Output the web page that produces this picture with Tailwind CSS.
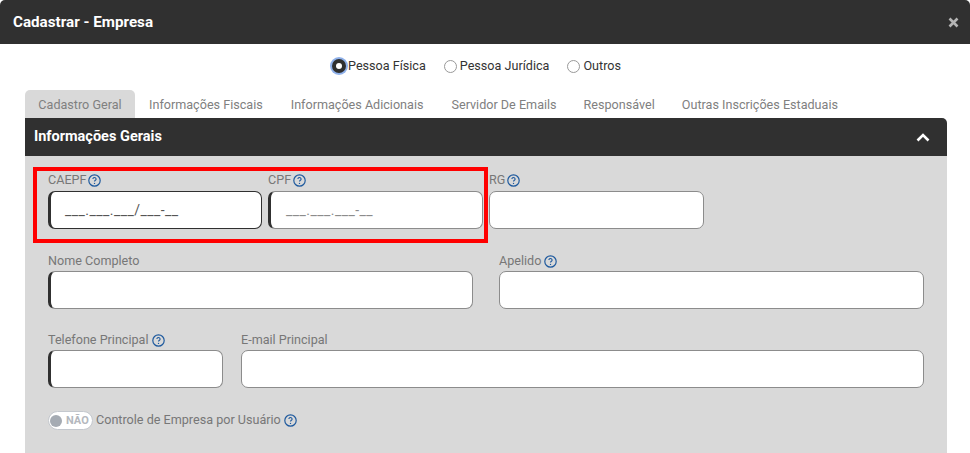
<!DOCTYPE html>
<html lang="pt-BR">
<head>
<meta charset="utf-8">
<script src="https://cdn.jsdelivr.net/npm/@tailwindcss/browser@4"></script>
</head>
<body class="bg-white">
<div class="relative w-[970px] h-[453px] overflow-hidden bg-white font-['Roboto',sans-serif] text-[12.6px] text-[#777]">
  <header class="h-11 bg-[#303030] rounded-t-[5px] flex items-center justify-between pl-[13px] pr-[11px]">
    <h1 class="text-[15.2px] font-bold text-white">Cadastrar - Empresa</h1>
    <svg class="w-[11px] h-[11px]" viewBox="0 0 11 11"><path d="M1.5 1.5l8 8M9.5 1.5l-8 8" stroke="#b4b4b4" stroke-width="2.6"/></svg>
  </header>

  <div class="h-[46px] flex items-center justify-center pr-[17px] text-[#333] pb-[2px]">
    <label class="flex items-center mr-[18px]">
      <span class="w-[14px] h-[14px] rounded-full bg-[#2f2f2f] ring-[2px] ring-[#8fb1ea] flex items-center justify-center"><span class="w-[6px] h-[6px] rounded-full bg-white"></span></span>
      <span class="ml-[2px]">Pessoa Física</span>
    </label>
    <label class="flex items-center mr-[18px]">
      <span class="w-[13px] h-[13px] rounded-full bg-white border border-[#999] mt-[1px]"></span>
      <span class="ml-[3px]">Pessoa Jurídica</span>
    </label>
    <label class="flex items-center">
      <span class="w-[13px] h-[13px] rounded-full bg-white border border-[#999] mt-[1px]"></span>
      <span class="ml-[3px]">Outros</span>
    </label>
  </div>

  <nav class="h-7 ml-[25px] flex items-center text-[#808080] pt-[2px]">
    <a class="h-7 w-[110px] -mt-[2px] pt-[2px] rounded-t-[5px] bg-[#d9d9d9] flex items-center justify-center">Cadastro Geral</a>
    <a class="ml-[14px]">Informações Fiscais</a>
    <a class="ml-[28px]">Informações Adicionais</a>
    <a class="ml-[28px]">Servidor De Emails</a>
    <a class="ml-[27px]">Responsável</a>
    <a class="ml-[27px]">Outras Inscrições Estaduais</a>
  </nav>

  <section class="ml-[25px] w-[922px] h-[335px]">
    <div class="h-[38px] bg-[#303030] rounded-tr-[5px] flex items-center justify-between pl-[9px] pr-[17px]">
      <h2 class="text-[14.5px] font-bold text-white">Informações Gerais</h2>
      <svg class="w-[14px] h-[9px]" viewBox="0 0 14 9"><path d="M1.500 7.500L7 2l5.500 5.500" fill="none" stroke="#fff" stroke-width="2.600"/></svg>
    </div>
    <div class="h-[297px] bg-[#d9d9d9] pt-[17px] pl-[23px] flex flex-col">

      <div class="flex gap-[6px]">
        <div class="w-[214px]">
          <div class="h-[18px] pb-[3px] flex items-center gap-[2px]">CAEPF
            <svg class="w-[13px] h-[13px]" viewBox="0 0 13 13"><circle cx="6.500" cy="6.500" r="5.700" fill="none" stroke="#1f5a9e" stroke-width="1.200"/><path d="M4.900 5.100a1.600 1.500 0 1 1 2.500 1.200c-.6.4-.9.600-.9 1.200" fill="none" stroke="#1f5a9e" stroke-width="1.100"/><circle cx="6.500" cy="9.400" r=".7" fill="#1f5a9e"/></svg>
          </div>
          <div class="h-[38px] bg-white rounded-[7px] border border-[#303030] border-l-[3px] flex items-center pl-[14px] text-[14px] text-[#555] tracking-[0.450px]">___.___.___/___-__</div>
        </div>
        <div class="w-[215px]">
          <div class="h-[18px] pb-[3px] flex items-center gap-[2px]">CPF
            <svg class="w-[13px] h-[13px]" viewBox="0 0 13 13"><circle cx="6.500" cy="6.500" r="5.700" fill="none" stroke="#1f5a9e" stroke-width="1.200"/><path d="M4.900 5.100a1.600 1.500 0 1 1 2.500 1.200c-.6.4-.9.600-.9 1.200" fill="none" stroke="#1f5a9e" stroke-width="1.100"/><circle cx="6.500" cy="9.400" r=".7" fill="#1f5a9e"/></svg>
          </div>
          <div class="h-[38px] bg-white rounded-[7px] border border-[#8c8c8c] border-l-[3px] border-l-[#303030] flex items-center pl-[15px] text-[14px] text-[#8c8c8c] tracking-[0.450px]">___.___.___-__</div>
        </div>
        <div class="w-[215px]">
          <div class="h-[18px] pb-[3px] flex items-center gap-[2px]">RG
            <svg class="w-[13px] h-[13px]" viewBox="0 0 13 13"><circle cx="6.500" cy="6.500" r="5.700" fill="none" stroke="#1f5a9e" stroke-width="1.200"/><path d="M4.900 5.100a1.600 1.500 0 1 1 2.500 1.200c-.6.4-.9.600-.9 1.200" fill="none" stroke="#1f5a9e" stroke-width="1.100"/><circle cx="6.500" cy="9.400" r=".7" fill="#1f5a9e"/></svg>
          </div>
          <div class="h-[38px] bg-white rounded-[7px] border border-[#8c8c8c]"></div>
        </div>
      </div>

      <div class="flex gap-[26px] mt-6">
        <div class="w-[425px]">
          <div class="h-[18px] pb-[2px] flex items-center">Nome Completo</div>
          <div class="h-[38px] bg-white rounded-[7px] border border-[#8c8c8c] border-l-[3px] border-l-[#303030]"></div>
        </div>
        <div class="w-[425px]">
          <div class="h-[18px] pb-[2px] flex items-center gap-[3px]">Apelido
            <svg class="w-[13px] h-[13px]" viewBox="0 0 13 13"><circle cx="6.500" cy="6.500" r="5.700" fill="none" stroke="#1f5a9e" stroke-width="1.200"/><path d="M4.900 5.100a1.600 1.500 0 1 1 2.500 1.200c-.6.4-.9.600-.9 1.200" fill="none" stroke="#1f5a9e" stroke-width="1.100"/><circle cx="6.500" cy="9.400" r=".7" fill="#1f5a9e"/></svg>
          </div>
          <div class="h-[38px] bg-white rounded-[7px] border border-[#8c8c8c]"></div>
        </div>
      </div>

      <div class="flex gap-[18px] mt-[23px]">
        <div class="w-[175px]">
          <div class="h-[18px] pb-[2px] flex items-center gap-[3px]">Telefone Principal
            <svg class="w-[13px] h-[13px]" viewBox="0 0 13 13"><circle cx="6.500" cy="6.500" r="5.700" fill="none" stroke="#1f5a9e" stroke-width="1.200"/><path d="M4.900 5.100a1.600 1.500 0 1 1 2.500 1.200c-.6.4-.9.600-.9 1.200" fill="none" stroke="#1f5a9e" stroke-width="1.100"/><circle cx="6.500" cy="9.400" r=".7" fill="#1f5a9e"/></svg>
          </div>
          <div class="h-[38px] bg-white rounded-[7px] border border-[#8c8c8c] border-l-[3px] border-l-[#303030]"></div>
        </div>
        <div class="w-[683px]">
          <div class="h-[18px] pb-[2px] flex items-center">E-mail Principal</div>
          <div class="h-[38px] bg-white rounded-[7px] border border-[#8c8c8c]"></div>
        </div>
      </div>

      <div class="flex items-center mt-[23px] h-[19px]">
        <span class="w-[45px] h-[19px] rounded-full bg-white border border-[#c4c8ce] flex items-center pl-[1px] text-[11px] font-bold text-[#b4b8be]">
          <span class="w-[12px] h-[12px] rounded-full bg-[#a5abb3] mr-[4px]"></span><span class="pt-[1px]">NÃO</span>
        </span>
        <span class="ml-[3px]">Controle de Empresa por Usuário</span>
        <svg class="ml-[3px] w-[13px] h-[13px]" viewBox="0 0 13 13"><circle cx="6.500" cy="6.500" r="5.700" fill="none" stroke="#1f5a9e" stroke-width="1.200"/><path d="M4.900 5.100a1.600 1.500 0 1 1 2.500 1.200c-.6.4-.9.600-.9 1.200" fill="none" stroke="#1f5a9e" stroke-width="1.100"/><circle cx="6.500" cy="9.400" r=".7" fill="#1f5a9e"/></svg>
      </div>
    </div>
  </section>

  <div class="absolute left-[33px] top-[167px] w-[455px] h-[76px] border-4 border-[#ff0000]"></div>
</div>
</body>
</html>
